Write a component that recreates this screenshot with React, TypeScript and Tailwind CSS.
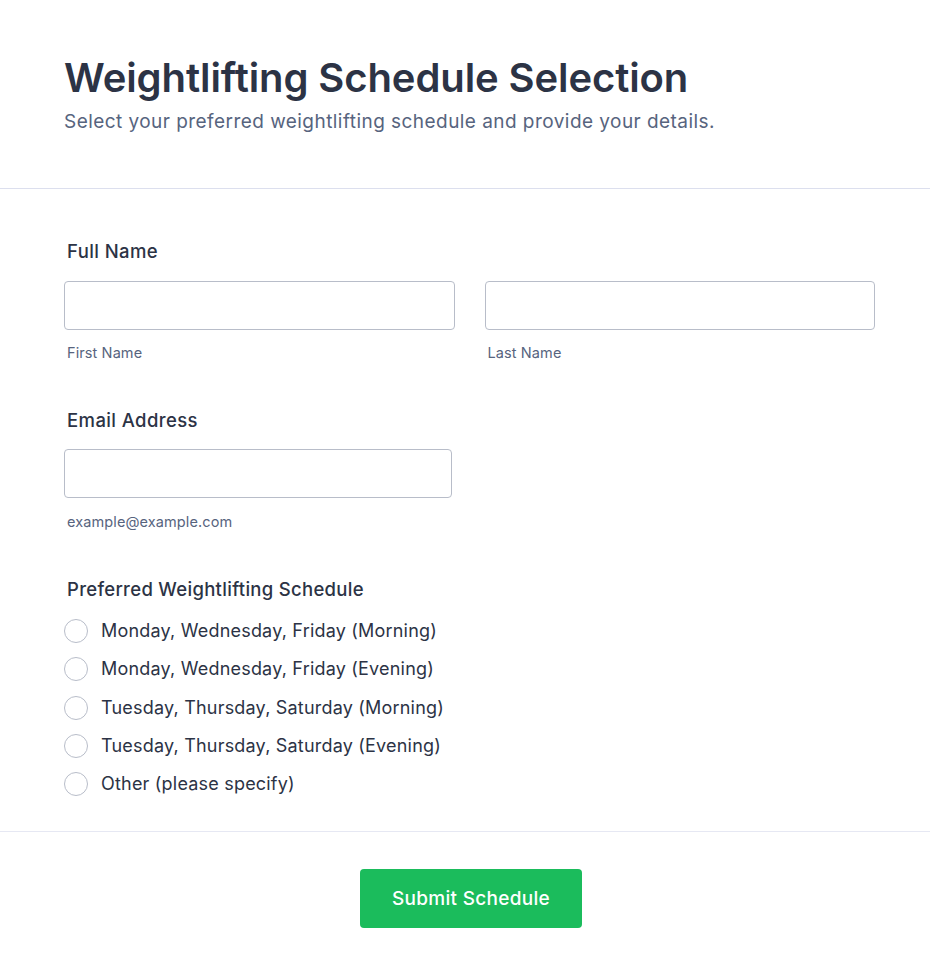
import React from "react";

const options = [
  "Monday, Wednesday, Friday (Morning)",
  "Monday, Wednesday, Friday (Evening)",
  "Tuesday, Thursday, Saturday (Morning)",
  "Tuesday, Thursday, Saturday (Evening)",
  "Other (please specify)",
];

export default function App() {
  return (
    <div className="min-h-[978px] bg-white text-[#2c3345]" style={{ fontFamily: "Inter, 'Noto Sans', sans-serif" }}>
      <div className="px-16 pt-[52px] pb-[52px] border-b border-[#dcdfee]">
        <h1 className="text-[40px] leading-[52px] font-semibold tracking-[-0.1px] text-[#2c3345]">
          Weightlifting Schedule Selection
        </h1>
        <p className="mt-[4px] text-[19px] leading-[28px] tracking-[0.45px] text-[#57647e]">
          Select your preferred weightlifting schedule and provide your details.
        </p>
      </div>

      <div className="px-16 pt-[50px] pb-[28px] border-b border-[#e6e8f3]">
        <div className="mb-[18px] px-[3px] text-[18.5px] leading-[24px] font-medium tracking-[0.4px]">Full Name</div>
        <div className="flex gap-[30px] w-[811px]">
          <div className="flex-1">
            <div className="h-[49px] rounded-[4px] border border-[#b8bdc9] bg-white" />
            <div className="mt-[13px] px-[3px] text-[14.5px] leading-[20px] tracking-[0.1px] text-[#57647e]">First Name</div>
          </div>
          <div className="flex-1">
            <div className="h-[49px] rounded-[4px] border border-[#b8bdc9] bg-white" />
            <div className="mt-[13px] px-[3px] text-[14.5px] leading-[20px] tracking-[0.1px] text-[#57647e]">Last Name</div>
          </div>
        </div>

        <div className="mt-[45px] mb-[17px] px-[3px] text-[18.5px] leading-[24px] font-medium tracking-[0.4px]">Email Address</div>
        <div className="w-[388px]">
          <div className="h-[49px] rounded-[4px] border border-[#b8bdc9] bg-white" />
          <div className="mt-[14px] px-[3px] text-[14.5px] leading-[20px] tracking-[0.1px] text-[#57647e]">example@example.com</div>
        </div>

        <div className="mt-[45px] mb-[11px] px-[3px] text-[18.5px] leading-[24px] font-medium tracking-[0.3px]">
          Preferred Weightlifting Schedule
        </div>
        <div className="flex flex-col">
          {options.map((o) => (
            <label key={o} className="flex items-center gap-[13px] h-[38.3px]">
              <span className="w-[24px] h-[24px] rounded-full border border-[#b8bdc9] bg-white shrink-0" />
              <span className="text-[18px] leading-[24px] tracking-[0.2px] text-[#2c3345]">{o}</span>
            </label>
          ))}
        </div>
      </div>

      <div className="flex justify-center pt-[37px] pl-[12px]">
        <button className="w-[222px] h-[59px] rounded-[4px] bg-[#1bbc5c] text-white text-[19px] font-medium tracking-[0.3px]">
          Submit Schedule
        </button>
      </div>
    </div>
  );
}
